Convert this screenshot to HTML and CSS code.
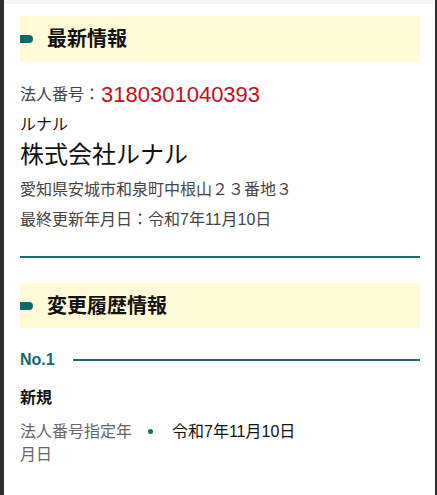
FILE: index.html
```html
<!DOCTYPE html>
<html lang="ja">
<head>
<meta charset="utf-8">
<link rel="stylesheet" href="styles.css">
</head>
<body>
<div class="frame">
  <div class="topstrip"></div>
  <div class="content">
    <h2 class="band"><span class="marker"></span><span class="band-title">最新情報</span></h2>
    <div class="corp-number"><span class="label">法人番号：</span><span class="num">3180301040393</span></div>
    <div class="kana">ルナル</div>
    <div class="name">株式会社ルナル</div>
    <div class="addr">愛知県安城市和泉町中根山２３番地３</div>
    <div class="updated">最終更新年月日：令和7年11月10日</div>
    <div class="rule"></div>

    <h2 class="band band2"><span class="marker"></span><span class="band-title">変更履歴情報</span></h2>
    <div class="no-row"><span class="no">No.1</span><span class="no-line"></span></div>
    <div class="kind">新規</div>
    <div class="detail">
      <div class="d-label">法人番号指定年月日</div>
      <span class="dot"></span>
      <div class="d-value">令和7年11月10日</div>
    </div>
  </div>
</div>
</body>
</html>
```
FILE: styles.css
```css
* { box-sizing: border-box; }
html, body { margin: 0; padding: 0; background: #fff; }
body {
  font-family: "Liberation Sans", "Noto Sans CJK JP", sans-serif;
  color: #111;
}
.frame {
  width: 437px;
  min-height: 495px;
  border-left: 4px solid #2e2e2e;
  border-right: 2px solid #2e2e2e;
  background: #fff;
}
.topstrip {
  height: 4px;
  background: #f4f4f4;
  margin-right: 1px;
}
.content {
  padding: 12px 15px 20px 16px;
}
.band {
  margin: 0;
  height: 46px;
  background: #fffbd6;
  display: flex;
  align-items: center;
  font-size: 20px;
  font-weight: bold;
  line-height: 26px;
  color: #111;
}
.band2 { margin-top: 25px; height: 45px; }
.marker {
  width: 13px;
  height: 8px;
  background: #0d6a66;
  border-radius: 0 4px 4px 0;
  margin-right: 14px;
  flex: none;
}
.corp-number {
  margin-top: 18px;
  height: 30px;
  display: flex;
  align-items: center;
}
.label { font-size: 16px; color: #444; line-height: 24px; }
.num {
  font-size: 22px;
  color: #c4101a;
  line-height: 28px;
  margin-left: 1px;
}
.kana { margin-top: 4px; font-size: 16px; line-height: 22px; color: #111; }
.name { margin-top: 3px; font-size: 24px; line-height: 32px; color: #111; }
.addr { margin-top: 5px; font-size: 16px; line-height: 28px; color: #444; }
.updated { margin-top: 2px; font-size: 16px; line-height: 28px; color: #444; }
.rule {
  margin-top: 22px;
  height: 2px;
  background: #1d6a72;
}
.no-row {
  margin-top: 22px;
  height: 20px;
  display: flex;
  align-items: center;
}
.no {
  font-size: 16px;
  font-weight: bold;
  color: #0f6a6a;
  line-height: 20px;
}
.no-line {
  flex: 1;
  height: 2px;
  background: #1d6a6e;
  margin-left: 18px;
}
.kind {
  margin-top: 16px;
  font-size: 16px;
  font-weight: bold;
  line-height: 24px;
}
.detail {
  margin-top: 10px;
  display: flex;
  align-items: flex-start;
}
.d-label {
  width: 120px;
  font-size: 16px;
  line-height: 23px;
  color: #666;
}
.dot {
  width: 5px;
  height: 5px;
  border-radius: 50%;
  background: #0f6a66;
  margin-left: 8px;
  margin-top: 9px;
  flex: none;
}
.d-value {
  margin-left: 19px;
  font-size: 16px;
  line-height: 23px;
  color: #111;
}
```
